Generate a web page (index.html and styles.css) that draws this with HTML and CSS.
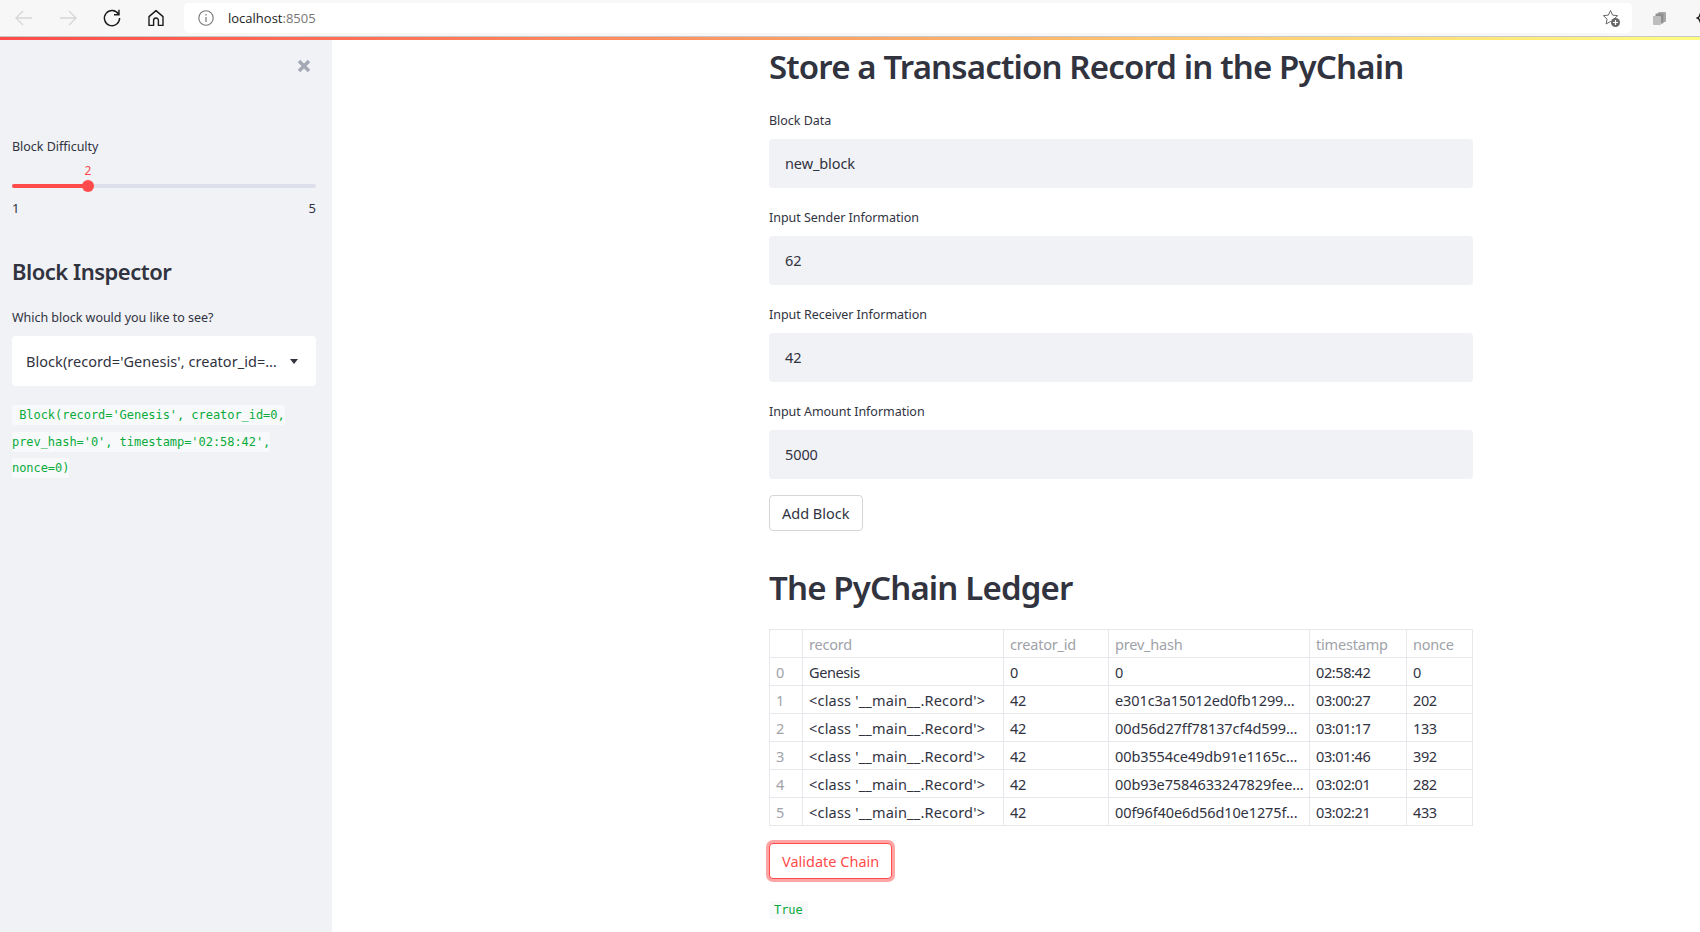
FILE: index.html
```html
<!DOCTYPE html>
<html lang="en">
<head>
  <meta charset="UTF-8">
  <title>PyChain</title>
  <link rel="stylesheet" href="styles.css">
</head>
<body>
  <header class="browser-bar">
    <div class="nav-buttons">
      <svg class="nav-icon" width="20" height="20" viewBox="0 0 20 20"><path d="M18 10H2M9 3l-7 7 7 7" fill="none" stroke="#d6d6d6" stroke-width="1.3"/></svg>
      <svg class="nav-icon" width="20" height="20" viewBox="0 0 20 20"><path d="M2 10h16M11 3l7 7-7 7" fill="none" stroke="#d6d6d6" stroke-width="1.3"/></svg>
      <svg class="nav-icon" width="20" height="20" viewBox="0 0 20 20"><path d="M16.5 6.2A7.6 7.6 0 1 0 17.6 10M17 1.8v5h-5" fill="none" stroke="#1c1c1c" stroke-width="1.4"/></svg>
      <svg class="nav-icon" width="20" height="20" viewBox="0 0 20 20"><path d="M3 8.6 10 2.6l7 6V17.400h-4.600v-5a2.400 2.400 0 0 0-4.800 0v5H3z" fill="none" stroke="#1c1c1c" stroke-width="1.4" stroke-linejoin="round"/></svg>
    </div>
    <div class="address-bar">
      <svg width="16" height="16" viewBox="0 0 16 16"><circle cx="8" cy="8" r="7.200" fill="none" stroke="#777" stroke-width="1.100"/><path d="M8 7v5M8 4v1.500" stroke="#777" stroke-width="1.200"/></svg>
      <span class="address-text">localhost<span class="address-port">:8505</span></span>
      <svg class="fav-icon" width="19" height="19" viewBox="0 0 19 19"><path d="M8.500 1.500l2.100 4.600 5 .6-3.700 3.400 1 4.900-4.400-2.500-4.400 2.500 1-4.900L1.400 6.700l5-.6z" fill="none" stroke="#666" stroke-width="1"/><circle cx="13.500" cy="13.500" r="4.500" fill="#666"/><path d="M11 13.500h5M13.500 11v5" stroke="#fff" stroke-width="1.200"/></svg>
    </div>
    <svg class="collections-icon" width="15" height="15" viewBox="0 0 15 15"><rect x="6" y="1" width="8" height="10" rx="1" fill="#a8a8a8"/><rect x="3.500" y="2.500" width="8" height="10" rx="1" fill="#8f8f8f"/><rect x="1" y="5" width="8" height="9" rx="1" fill="#bdbdbd"/></svg>
    <svg class="extension-icon" width="10" height="16" viewBox="0 0 10 16"><path d="M7 1.500C3 1.500 5 7 1.500 8 5 9 3 14.500 7 14.500" fill="none" stroke="#1c1c1c" stroke-width="1.400"/></svg>
  </header>
  <div class="top-line"></div>

  <div class="app">
    <aside class="sidebar">
      <div class="sidebar-close">
        <svg width="14" height="14" viewBox="0 0 14 14"><path d="M2 2l10 10M12 2L2 12" stroke="#a3a8b4" stroke-width="3.400"/></svg>
      </div>

      <div class="widget-label">Block Difficulty</div>
      <div class="slider">
        <div class="slider-value">2</div>
        <div class="slider-track">
          <div class="slider-fill"></div>
          <div class="slider-thumb"></div>
        </div>
        <div class="slider-ends"><span>1</span><span>5</span></div>
      </div>

      <h2 class="sidebar-title">Block Inspector</h2>
      <div class="widget-label">Which block would you like to see?</div>
      <div class="select-box">
        <span class="select-text">Block(record='Genesis', creator_id=…</span>
        <span class="select-caret"></span>
      </div>
      <p class="code-block"><code>&nbsp;Block(record='Genesis', creator_id=0,</code><br><code>prev_hash='0', timestamp='02:58:42',</code><br><code>nonce=0)</code></p>
    </aside>

    <main class="main">
      <div class="content">
        <h1 class="page-title">Store a Transaction Record in the PyChain</h1>

        <div class="widget-label">Block Data</div>
        <div class="text-input">new_block</div>
        <div class="widget-label">Input Sender Information</div>
        <div class="text-input">62</div>
        <div class="widget-label">Input Receiver Information</div>
        <div class="text-input">42</div>
        <div class="widget-label">Input Amount Information</div>
        <div class="text-input">5000</div>

        <button class="btn">Add Block</button>

        <h1 class="ledger-title">The PyChain Ledger</h1>

        <table class="ledger">
          <thead>
            <tr><th></th><th>record</th><th>creator_id</th><th>prev_hash</th><th>timestamp</th><th>nonce</th></tr>
          </thead>
          <tbody>
            <tr><td class="idx">0</td><td>Genesis</td><td>0</td><td>0</td><td>02:58:42</td><td>0</td></tr>
            <tr><td class="idx">1</td><td class="rec">&lt;class '__main__.Record'&gt;</td><td>42</td><td class="hash">e301c3a15012ed0fb1299...</td><td>03:00:27</td><td>202</td></tr>
            <tr><td class="idx">2</td><td class="rec">&lt;class '__main__.Record'&gt;</td><td>42</td><td class="hash">00d56d27ff78137cf4d599...</td><td>03:01:17</td><td>133</td></tr>
            <tr><td class="idx">3</td><td class="rec">&lt;class '__main__.Record'&gt;</td><td>42</td><td class="hash">00b3554ce49db91e1165c...</td><td>03:01:46</td><td>392</td></tr>
            <tr><td class="idx">4</td><td class="rec">&lt;class '__main__.Record'&gt;</td><td>42</td><td class="hash">00b93e7584633247829fee...</td><td>03:02:01</td><td>282</td></tr>
            <tr><td class="idx">5</td><td class="rec">&lt;class '__main__.Record'&gt;</td><td>42</td><td class="hash">00f96f40e6d56d10e1275f...</td><td>03:02:21</td><td>433</td></tr>
          </tbody>
        </table>

        <button class="btn btn-focus">Validate Chain</button>
        <p class="result"><code>True</code></p>
      </div>
    </main>
  </div>
</body>
</html>
```

FILE: styles.css
```css
:root {
  --text: #31333f;
  --panel: #f0f2f6;
  --accent: #ff4b4b;
  --code-green: #09ab3b;
  --line: #e6e8ec;
}
* {
  box-sizing: border-box;
}
html, body {
  height: 100%;
}
body {
  margin: 0;
  display: flex;
  flex-direction: column;
  overflow: hidden;
  background: #fff;
  color: var(--text);
  font-family: "Noto Sans", "Open Sans", sans-serif;
}

/* browser chrome */
.browser-bar {
  height: 37px;
  flex: none;
  display: flex;
  align-items: center;
  background: #f7f7f7;
  border-bottom: 1px solid #c8c8c8;
  overflow: hidden;
}
.nav-buttons {
  display: flex;
  gap: 24px;
  padding-left: 14px;
  width: 184px;
  flex: none;
}
.address-bar {
  width: 1448px;
  height: 30px;
  flex: none;
  display: flex;
  align-items: center;
  background: #fff;
  border-radius: 5px;
  padding: 0 11px 0 14px;
}
.address-text {
  margin-left: 14px;
  font-family: "Open Sans", sans-serif;
  font-size: 13px;
  color: #1c1c1c;
}
.address-port {
  color: #777;
}
.fav-icon {
  margin-left: auto;
}
.collections-icon {
  margin-left: 20px;
  flex: none;
}
.extension-icon {
  margin-left: 29px;
  flex: none;
}
.top-line {
  height: 3px;
  flex: none;
  background: linear-gradient(90deg, #ff4b4b, #fffd80);
}

/* app layout */
.app {
  flex: 1;
  display: flex;
  min-height: 0;
}
.sidebar {
  width: 332px;
  flex: none;
  background: var(--panel);
  padding: 19px 16px 0 12px;
}
.sidebar-close {
  display: flex;
  justify-content: flex-end;
  padding-right: 5px;
  height: 79px;
}
.main {
  flex: 1;
  padding-left: 437px;
}
.content {
  width: 704px;
}

.widget-label {
  font-size: 12.500px;
  line-height: 18px;
  letter-spacing: -0.03px;
  margin-bottom: 9px;
}
.text-input + .widget-label {
  margin-top: 21px;
}

/* slider */
.slider-value {
  color: var(--accent);
  font-size: 12px;
  line-height: 16px;
  margin: -2px 0 0 71px;
  width: 10px;
  text-align: center;
}
.slider-track {
  position: relative;
  height: 4px;
  margin-top: 5px;
  background: #dde0ea;
  border-radius: 2px;
}
.slider-fill {
  width: 76px;
  height: 4px;
  background: var(--accent);
  border-radius: 2px;
}
.slider-thumb {
  position: absolute;
  left: 70px;
  top: -4px;
  width: 12px;
  height: 12px;
  border-radius: 50%;
  background: var(--accent);
}
.slider-ends {
  display: flex;
  justify-content: space-between;
  font-size: 13px;
  line-height: 16px;
  margin-top: 12px;
}

.sidebar-title {
  margin: 39px 0 22px;
  font-size: 22px;
  line-height: 32px;
  font-weight: 600;
  letter-spacing: -0.5px;
}
.sidebar .widget-label:last-of-type {
  margin-bottom: 8px;
}
.select-box {
  height: 50px;
  display: flex;
  align-items: center;
  justify-content: space-between;
  background: #fff;
  border-radius: 4px;
  padding: 0 18px 0 14px;
  font-size: 14.500px;
  letter-spacing: 0.05px;
}
.select-text {
  white-space: nowrap;
}
.select-caret {
  border-left: 4px solid transparent;
  border-right: 4px solid transparent;
  border-top: 5px solid var(--text);
}
.code-block {
  margin: 16px 0 0;
  font-size: 12px;
  line-height: 25.500px;
}
code {
  font-family: "DejaVu Sans Mono", "Liberation Mono", monospace;
  font-size: 12px;
  letter-spacing: -0.05px;
  color: var(--code-green);
  background: #f8f9fb;
  padding: 3px 0;
  border-radius: 3px;
}

/* main column */
.page-title, .ledger-title {
  margin: 0;
  font-size: 33px;
  font-weight: 600;
  letter-spacing: -0.85px;
  line-height: 52px;
}
.page-title {
  margin: 1px 0 19px;
}
.ledger-title {
  margin: 31px 0 15px;
}
.text-input {
  height: 49px;
  display: flex;
  align-items: center;
  background: var(--panel);
  border-radius: 4px;
  padding: 0 16px 2px;
  font-size: 14.500px;
  letter-spacing: -0.1px;
}
.btn {
  display: block;
  height: 36px;
  padding: 0 12px;
  background: #fff;
  border: 1px solid #d5d6da;
  border-radius: 4px;
  color: var(--text);
  font-family: inherit;
  font-size: 14.500px;
  margin-top: 16px;
}
.btn-focus {
  color: var(--accent);
  border-color: var(--accent);
  box-shadow: 0 0 0 3px rgba(255, 75, 75, 0.5);
  margin-top: 17px;
}
.ledger {
  width: 704px;
  table-layout: fixed;
  border-collapse: collapse;
  font-size: 14.500px;
  letter-spacing: -0.4px;
}
.ledger th, .ledger td {
  height: 28px;
  padding: 0 6px;
  border: 1px solid var(--line);
  text-align: left;
  font-weight: 400;
  white-space: nowrap;
  overflow: hidden;
}
.ledger th {
  color: #a0a2a9;
  letter-spacing: -0.2px;
}
.ledger th:nth-child(1) { width: 33px; }
.ledger th:nth-child(2) { width: 201px; }
.ledger th:nth-child(3) { width: 105px; }
.ledger th:nth-child(4) { width: 201px; }
.ledger th:nth-child(5) { width: 97px; }
.ledger .idx {
  color: #a0a2a9;
}
.ledger .rec {
  letter-spacing: 0.2px;
}
.ledger .hash {
  letter-spacing: -0.1px;
}
.result {
  margin: 21px 0 0;
  line-height: 17px;
}
.result code {
  padding: 2px 5px;
}
```
